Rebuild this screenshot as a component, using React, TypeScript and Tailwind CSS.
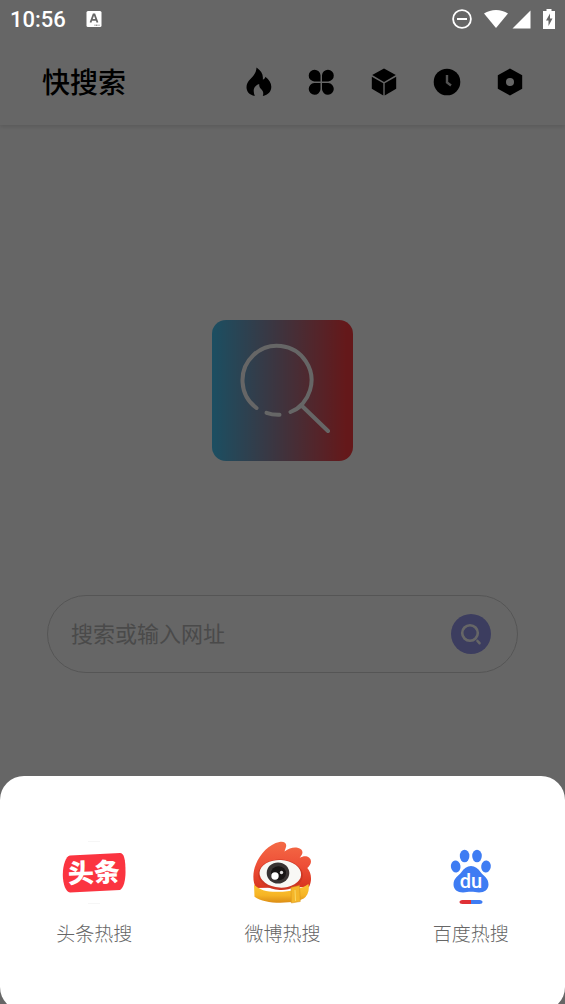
const navItems = [
  { label: '热搜', Icon: FireIcon },
  { label: '应用', Icon: CloverIcon },
  { label: '资源', Icon: CubeIcon },
  { label: '历史', Icon: ClockIcon },
  { label: '设置', Icon: HexagonIcon },
]

const hotSources = [
  { label: '头条热搜', Icon: ToutiaoLogo },
  { label: '微博热搜', Icon: WeiboLogo },
  { label: '百度热搜', Icon: BaiduLogo },
]

function FireIcon() {
  return (
    <svg viewBox="0 0 28 30" className="h-[30px] w-7" fill="currentColor" aria-hidden="true">
      <path d="M12.500.5C17 3.500 19.500 7.500 18.800 12.500c1.500-.4 2.300-1.300 2.600-2.800 3.700 3 5.900 6.300 5.900 10 0 4.800-3 8-8.500 9.300 1-3 .3-5-1.500-6.800-1.500-1.300-2.200-2.800-2.100-5.100-3.700 1.400-5.500 3.400-5.500 6.900 0 1.800.5 3.400 1.100 5C5.500 28 2.500 24.800 2.500 20.300c0-3.300 1.300-5.600 3.700-8C9.700 9 12.400 5.500 12.500.5z" />
    </svg>
  )
}

function CloverIcon() {
  return (
    <svg viewBox="0 0 28 28" className="size-7" fill="currentColor" aria-hidden="true">
      <path d="M13.500 13.500H7.200A5.900 5.900 0 1 1 13.500 7.200z" />
      <path d="M15 13.500H21.300A5.900 5.900 0 1 0 15 7.200z" />
      <path d="M13.500 15H7.200A5.900 5.900 0 1 0 13.500 21.300z" />
      <path d="M15 15H21.300A5.900 5.900 0 1 1 15 21.300z" />
    </svg>
  )
}

function CubeIcon() {
  return (
    <svg viewBox="0 0 28 28" className="size-7" fill="currentColor" aria-hidden="true">
      <path d="M14 .4 25.800 7.100 14 13.900 2.200 7.100z" />
      <path d="M1.800 8.700 13.300 15.300V27.400L1.800 20.800z" />
      <path d="M26.200 8.700 14.700 15.300V27.400l11.500-6.600z" />
    </svg>
  )
}

function ClockIcon() {
  return (
    <svg viewBox="0 0 28 28" className="size-7" aria-hidden="true">
      <circle cx="14" cy="14" r="13.300" fill="currentColor" />
      <path d="M14 7v7.500l4 3" fill="none" stroke="#d0d0d0" strokeWidth="2.400" />
    </svg>
  )
}

function HexagonIcon() {
  return (
    <svg viewBox="0 0 28 28" className="size-7" aria-hidden="true">
      <path d="M14 .4 26.200 7.200v13.600L14 27.600 1.800 20.800V7.200z" fill="currentColor" />
      <circle cx="14" cy="14" r="4" fill="#fff" />
    </svg>
  )
}

function ToutiaoLogo() {
  return (
    <svg viewBox="0 0 64 64" className="size-16" aria-hidden="true">
      <path d="M26 .5h12M26 62.500h12" stroke="#f6f6f6" />
      <path d="M8 14.500 58 12c4 0 5.500 6 5.500 19 0 9-2 16-5.500 18L8 51.500C4 51.500.8 43 .8 34 .8 24 4 15 8 14.500z" fill="#fb3440" />
      <text
        x="32"
        y="41"
        textAnchor="middle"
        transform="rotate(-2 32 32)"
        fill="#fff"
        className="font-['Noto_Sans_CJK_SC',sans-serif] text-[26px] font-black"
      >
        头条
      </text>
    </svg>
  )
}

function WeiboLogo() {
  return (
    <svg viewBox="0 0 64 64" className="size-16" aria-hidden="true">
      <defs>
        <linearGradient id="weibo-red" x1="0" y1="0" x2="0" y2="1">
          <stop offset="0" stopColor="#f46a45" />
          <stop offset="0.500" stopColor="#ee5038" />
          <stop offset="1" stopColor="#d8351f" />
        </linearGradient>
        <linearGradient id="weibo-gold" x1="0" y1="0" x2="0" y2="1">
          <stop offset="0" stopColor="#fbc634" />
          <stop offset="0.600" stopColor="#f6b425" />
          <stop offset="1" stopColor="#dc8d15" />
        </linearGradient>
      </defs>
      <path d="M6 47C2.500 41 2.500 31 6 23 10 13 19 3 29.500 1c5-.8 7.500 1.500 6.500 5l-1.500 4.500C39 7.500 43 6 47.500 6.800c5.500 1 6 4.700 3.500 8.200l-1.300 1.800c3-1.700 6.800-2.300 9.300-.3 3.500 3 2 7-1.700 10.500 4.200 4.500 5 12.500 1.700 19z" fill="url(#weibo-red)" />
      <path d="M4 43.500c5 5.500 13 7.500 24 7.300 13-.2 22-2.300 30.500-7.800 1 5 0 9.500-3 13-4 4-14 5.700-25 5.700-11 0-20-2-26-6z" fill="url(#weibo-gold)" />
      <ellipse cx="30.500" cy="33.800" rx="22.300" ry="15.200" transform="rotate(3 30.500 33.800)" fill="#cd3623" />
      <ellipse cx="30.300" cy="32.800" rx="20.800" ry="13.800" transform="rotate(3 30.300 32.800)" fill="#f8f8f5" />
      <ellipse cx="28" cy="32" rx="11.300" ry="10.500" fill="#383333" />
      <ellipse cx="28.500" cy="32.300" rx="7.500" ry="7" fill="#171414" />
      <circle cx="25" cy="35" r="3.700" fill="#fff" />
      <circle cx="31.500" cy="31.500" r="1.700" fill="#ddd" />
      <path d="m41 46.500 8.500-2 .8 16-9 1.500z" fill="#f4b62a" stroke="#d59118" strokeWidth="0.500" />
      <path d="m45 49 .5 11" stroke="#fbd863" />
    </svg>
  )
}

function BaiduLogo() {
  return (
    <svg viewBox="0 0 64 64" className="size-16" aria-hidden="true">
      <g fill="#3e7cf3">
        <ellipse cx="25.600" cy="15" rx="4.800" ry="6.300" />
        <ellipse cx="38" cy="15" rx="4.800" ry="6.300" />
        <ellipse cx="16.700" cy="25.500" rx="4.800" ry="6" transform="rotate(-8 16.700 25.500)" />
        <ellipse cx="47" cy="25.500" rx="4.800" ry="6" transform="rotate(8 47 25.500)" />
        <path d="M32 25c4 0 7 2.500 9.500 6 3 4 8 6 8 12.500 0 5-4 8-9.500 8-3 0-5-.7-8-.7s-5 .7-8 .7c-5.500 0-9.500-3-9.500-8 0-6.500 5-8.500 8-12.500 2.500-3.500 5.500-6 9.500-6z" />
      </g>
      <text x="32" y="47" textAnchor="middle" fill="#fff" className="font-[Roboto,sans-serif] text-[20px] font-medium">
        du
      </text>
      <path d="M32 59v4h-8.500c-4 0-4-4 0-4z" fill="#df3036" />
      <path d="M32 59v4h8.500c4 0 4-4 0-4z" fill="#3e7cf3" />
    </svg>
  )
}

function AppLogo() {
  return (
    <svg viewBox="0 0 141 141" className="size-[141px]" aria-hidden="true">
      <defs>
        <linearGradient id="logo-bg">
          <stop offset="0" stopColor="#46c5f5" />
          <stop offset="0.500" stopColor="#a07f98" />
          <stop offset="0.950" stopColor="#fb3e42" />
        </linearGradient>
      </defs>
      <rect width="141" height="141" rx="14" fill="url(#logo-bg)" />
      <g fill="none" stroke="#fff" strokeWidth="4" strokeLinecap="round" strokeLinejoin="round">
        <path d="M44.500 88A34.500 34.500 0 1 1 78.500 92Q85 89.500 89.500 85.500L116 111" />
        <path d="M54.500 92.800q6 2.200 13 2" />
      </g>
    </svg>
  )
}

function StatusBar() {
  return (
    <div className="relative z-20 flex h-[38px] items-center justify-between bg-[#666] px-2.5 text-white">
      <div className="flex items-center gap-5">
        <span className="pt-0.5 font-[Roboto,sans-serif] text-[22px] leading-6 font-medium">10:56</span>
        <svg viewBox="0 0 16 18" className="h-[18px] w-4" aria-hidden="true">
          <rect x=".5" y="1" width="15" height="16" rx="1.500" fill="#fff" />
          <path d="m4.500 12.500 3-8h1l3 8M5.700 9.800h4.600" fill="none" stroke="#666" strokeWidth="1.800" />
          <path d="M8.500 15.200h5" stroke="#666" strokeDasharray="1 .5" />
        </svg>
      </div>
      <div className="flex items-center">
        <svg viewBox="0 0 20 20" className="mr-3 size-5" aria-hidden="true">
          <circle cx="10" cy="10" r="8.900" fill="none" stroke="#fff" strokeWidth="1.800" />
          <path d="M5 10h10" stroke="#fff" strokeWidth="2" />
        </svg>
        <svg viewBox="0 0 24 20" className="mr-1 h-5 w-6" fill="#fff" aria-hidden="true">
          <path d="M0 4.500C7-.2 17-.2 24 4.500L12 19z" />
        </svg>
        <svg viewBox="0 0 19 19" className="mr-3 size-[19px]" fill="#fff" aria-hidden="true">
          <path d="M18.500.5v18H.5z" />
        </svg>
        <svg viewBox="0 0 12 20" className="h-5 w-3" aria-hidden="true">
          <path d="M3.500 0h5v2H12v18H0V2h3.500z" fill="#fff" />
          <path d="M7 4.500 3 11.500h2.500V17L9.500 9.500H7z" fill="#666" />
        </svg>
      </div>
    </div>
  )
}

export default function App() {
  return (
    <div className="relative flex h-screen flex-col overflow-hidden bg-white font-['Noto_Sans_CJK_SC',sans-serif]">
      <StatusBar />

      <header className="flex h-[87px] shrink-0 items-center justify-between pr-[41px] pl-[42px] shadow-[0_2px_4px_rgba(0,0,0,0.12)]">
        <h1 className="pb-0.5 text-[28px] leading-10 font-medium text-black">快搜索</h1>
        <nav className="flex items-center gap-[35px]">
          {navItems.map(({ label, Icon }) => (
            <button key={label} type="button" aria-label={label} className="flex w-7 items-center justify-center">
              <Icon />
            </button>
          ))}
        </nav>
      </header>

      <main className="flex flex-col items-center px-[47px] pt-[195px]">
        <AppLogo />
        <form className="mt-[134px] flex h-[78px] w-full items-center rounded-full border border-[#d4d4d4] pr-[26px] pl-[23px]">
          <input
            type="text"
            aria-label="搜索或输入网址"
            placeholder="搜索或输入网址"
            className="h-10 min-w-0 flex-1 bg-transparent pb-1 text-[22px] outline-none placeholder:text-[#b8b8b8]"
          />
          <button type="submit" aria-label="搜索" className="flex size-10 items-center justify-center rounded-full bg-[#9799ee]">
            <svg viewBox="0 0 24 24" className="size-6" fill="none" stroke="#fff" strokeLinecap="round" aria-hidden="true">
              <circle cx="11" cy="11" r="7.800" strokeWidth="2.600" />
              <path d="m18.500 19 2 2.200" strokeWidth="2.600" />
            </svg>
          </button>
        </form>
      </main>

      <div className="absolute inset-0 z-10 bg-black/60" />

      <section aria-label="热搜榜" className="absolute inset-x-0 -bottom-[7px] z-20 grid grid-cols-3 rounded-3xl bg-white pt-[65px] pb-16">
        {hotSources.map(({ label, Icon }) => (
          <button key={label} type="button" className="flex flex-col items-center gap-3.5 text-[#666]">
            <Icon />
            <span className="text-[19px] leading-7 font-light">{label}</span>
          </button>
        ))}
      </section>
    </div>
  )
}
